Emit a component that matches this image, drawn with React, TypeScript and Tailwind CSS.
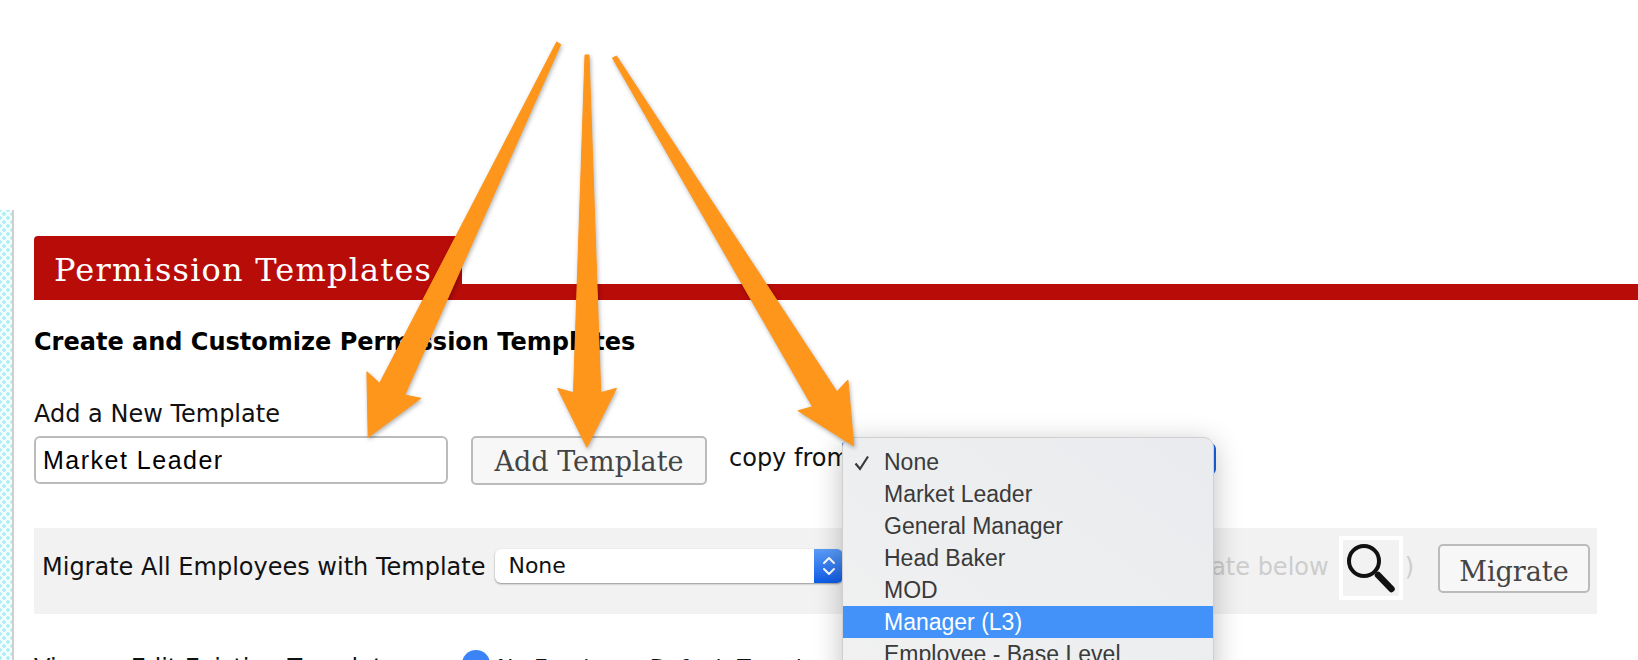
export default function App() {
  const items = ["None", "Market Leader", "General Manager", "Head Baker", "MOD", "Manager (L3)", "Employee - Base Level", "Team Member"];
  return (
    <div className="relative flex h-[660px] w-[1638px] overflow-hidden bg-white font-['DejaVu_Sans',sans-serif] text-[24px] leading-[28px] text-[#111]">
      <div className="mt-[210px] flex h-[450px] shrink-0">
        <div className="w-[12px] bg-[#f4fdfe] bg-[radial-gradient(circle,#a8f0f6_1.5px,transparent_2px),radial-gradient(circle,#a8f0f6_1.5px,transparent_2px)] bg-[length:8px_8px] bg-[position:0_0,4px_4px]" />
        <div className="w-[2px] bg-[#cfcfcf]" />
      </div>
      <main className="min-w-0 flex-1 pl-[20px] pt-[236px]">
        <div className="flex h-[64px] items-stretch border-b-[16px] border-[#b80c09]">
          <h1 className="-mb-[16px] h-[64px] w-[428px] rounded-tl-[4px] bg-[#b80c09] pl-[20px] pt-[18px] font-['DejaVu_Serif',serif] text-[32px] font-normal leading-[32px] tracking-[1.2px] text-white">Permission Templates</h1>
        </div>
        <h2 className="mt-[28px] text-[24px] font-bold leading-[28px] text-black">Create and Customize Permission Templates</h2>
        <p className="mt-[44px] leading-[28px]">Add a New Template</p>
        <div className="mt-[8px] flex items-start">
          <div className="flex h-[48px] w-[414px] items-center rounded-[6px] border-2 border-[#bbbbbb] pl-[7px] font-['Liberation_Sans',sans-serif] text-[25px] tracking-[1.5px] text-black">Market Leader</div>
          <button className="ml-[23px] h-[49px] w-[236px] rounded-[5px] border-2 border-[#bbbbbb] bg-[#f7f7f7] pt-[2px] font-['DejaVu_Serif',serif] text-[27px] leading-[40px] text-[#444]">Add Template</button>
          <span className="ml-[22px] mt-[8px] w-[113px] whitespace-nowrap">copy from</span>
          <div className="mt-[7px] h-[32px] w-[374px] rounded-r-[6px] bg-[#1a62e0]" />
        </div>
        <div className="mt-[43px] mr-[41px] flex h-[86px] items-start bg-[#f2f2f2] pl-[8px] pr-[7px]">
          <span className="mt-[25px] whitespace-nowrap">Migrate All Employees with Template</span>
          <div className="ml-[10px] mt-[21px] flex h-[34px] w-[348px] shrink-0 items-center overflow-hidden rounded-[6px] bg-white shadow-[0_1px_2px_rgba(0,0,0,0.4)]">
            <span className="flex-1 pl-[13px] text-[22px]">None</span>
            <span className="flex h-full w-[29px] items-center justify-center bg-gradient-to-b from-[#5b9cf8] to-[#0b5ce6]">
              <svg width="16" height="24" viewBox="0 0 16 24" fill="none" stroke="white" strokeWidth="2" strokeLinecap="round" strokeLinejoin="round"><path d="M3 9 8 4l5 5" /><path d="M3 15l5 5 5-5" /></svg>
            </span>
          </div>
          <span className="mt-[25px] flex-1 whitespace-nowrap text-right text-[#cdcdcd]">(select a template below</span>
          <div className="ml-[10px] mt-[8px] h-[64px] w-[64px] shrink-0 border-4 border-white bg-[#f2f2f2]">
            <svg width="56" height="56" viewBox="0 0 56 56" fill="none" stroke="#111"><circle cx="21" cy="21" r="15" strokeWidth="4" /><path d="M35 35 48.5 49" strokeWidth="6.5" strokeLinecap="round" /></svg>
          </div>
          <span className="ml-[2px] mt-[25px] text-[#cdcdcd]">)</span>
          <button className="ml-[24px] mt-[16px] h-[49px] w-[152px] shrink-0 rounded-[5px] border-2 border-[#bbbbbb] bg-[#f7f7f7] pt-[6px] font-['DejaVu_Serif',serif] text-[27px] leading-[38px] text-[#444]">Migrate</button>
        </div>
        <div className="mt-[36px] flex items-start">
          <span className="mt-[4px] w-[428px] shrink-0 whitespace-nowrap">View or Edit Existing Templates</span>
          <span className="h-[28px] w-[28px] shrink-0 rounded-full bg-[#3b84f7]" />
          <span className="ml-[7px] mt-[4px] whitespace-nowrap text-[22px]">No Employee Default Template</span>
        </div>
      </main>

      <div className="absolute left-[842px] top-[437px] w-[372px] rounded-t-[10px] border border-[#cfcfcf] bg-gradient-to-bl from-[#e9ebee] to-[#f1f1f1] pb-[6px] pt-[8px] font-['Liberation_Sans',sans-serif] text-[23px] text-[#3a3a3a] shadow-[0_6px_28px_rgba(0,0,0,0.25)]">
        {items.map((t, i) => (
          <div key={t} className={`relative flex h-[32px] items-center pl-[41px] ${t === "Manager (L3)" ? "bg-[#4292f9] text-white" : ""}`}>
            {i === 0 && (
              <svg className="absolute left-[11px] top-[9px]" width="16" height="16" viewBox="0 0 16 16" fill="none" stroke="#3a3a3a" strokeWidth="2.2"><path d="M1.5 8.5 6 14 14 1.5" /></svg>
            )}
            {t}
          </div>
        ))}
      </div>

      <svg className="pointer-events-none absolute left-0 top-0 drop-shadow-[1px_2px_2px_rgba(0,0,0,0.3)]" width="1638" height="660" viewBox="0 0 1638 660" fill="#fe961c" stroke="#fe961c" strokeWidth="1" strokeLinejoin="round">
        <path d="M556.7 42 560.7 44.5 404.7 395 420.9 398.3 368.2 437.3 366.9 371.7 379.6 383.3Z" />
        <path d="M585 55 589 55 600.7 392.7 616.5 388.3 586.9 447.3 557.6 388.3 573.5 392.7Z" />
        <path d="M612.5 58 616.5 56 836.9 391.7 847.9 380 853.8 446 798 410.7 812.5 406.7Z" />
      </svg>
    </div>
  );
}
